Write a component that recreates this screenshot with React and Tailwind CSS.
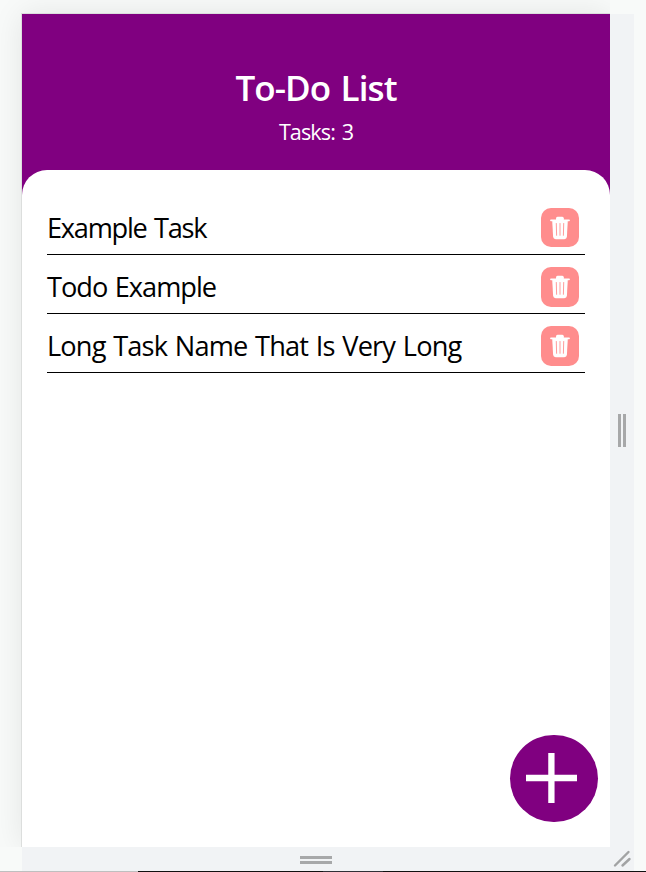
const tasks = [
  { name: "Example Task", tracking: "tracking-[-1.25px]", button: "h-[39px]" },
  { name: "Todo Example", tracking: "tracking-[-1.02px]", button: "h-[40px]" },
  { name: "Long Task Name That Is Very Long", tracking: "tracking-[-0.86px]", button: "h-[40px]" },
];

function TrashIcon() {
  return (
    <svg className="h-[24px] w-[20px]" viewBox="0 0 20 24" fill="none">
      <path d="M6 4V2.2Q6 .7 7.5.7h4.8q1.5 0 1.5 1.5V4" fill="white" />
      <path d="M1 4.3h18" stroke="white" strokeWidth="1.8" strokeLinecap="round" />
      <path d="M2.2 4.5h15.6l-.9 16.3q-.2 2.4-2.6 2.4H5.7q-2.4 0-2.6-2.4z" fill="white" />
      <path d="M6.3 7.5l.3 11.8M10 7.5v11.8M13.7 7.5l-.3 11.8" stroke="#ff9c9c" strokeWidth="1" strokeLinecap="round" />
    </svg>
  );
}

function Task({ name, tracking, button }) {
  return (
    <li className="flex h-[59px] items-start justify-between border-b border-black pr-[6px] pt-[12px]">
      <span className={`whitespace-nowrap text-[27.2px] leading-[40px] [word-spacing:1.5px] ${tracking}`}>{name}</span>
      <button aria-label="Delete" className={`flex w-[38px] items-center justify-center rounded-[10px] bg-[#ff8d8d] ${button}`}>
        <TrashIcon />
      </button>
    </li>
  );
}

export default function App() {
  return (
    <div className="flex h-[872px] w-[646px] flex-col overflow-hidden bg-[#f8faf9] font-['Open_Sans','Noto_Sans',sans-serif] text-black">
      <div className="flex h-[871px] pl-[22px] pt-[14px]">
        <div className="flex w-[612px] flex-col bg-[#f1f3f5]">
          <div className="flex h-[833px]">
            <main className="flex w-[588px] flex-col bg-[#800080] shadow-[0_0_0_1px_#dcdedd,0_0_30px_rgba(0,0,0,0.09)] [clip-path:inset(-14px_0_0_-22px)]">
              <header className="flex h-[156px] flex-col items-center pt-[49px] text-white">
                <h1 className="text-[35px] font-semibold leading-[50px] tracking-[-0.9px] [word-spacing:2px]">To-Do List</h1>
                <p className="mt-px text-[21.6px] leading-[36px] tracking-[-0.9px] [word-spacing:2px]">Tasks: 3</p>
              </header>
              <section className="flex flex-1 flex-col justify-between rounded-t-[25px] bg-white pl-[25px] pr-[12px] pt-[26px] pb-[25px]">
                <ul className="w-[538px]">
                  {tasks.map((t) => <Task key={t.name} {...t} />)}
                </ul>
                <button aria-label="Add task" className="h-[87px] w-[88px] self-end rounded-full bg-[#800080]">
                  <svg className="h-[87px] w-[88px]" viewBox="0 0 88 87">
                    <path d="M16 43h51M41.4 18v50" stroke="white" strokeWidth="6.3" />
                  </svg>
                </button>
              </section>
            </main>
            <div className="flex w-[24px] items-center gap-[2px] pl-[8px]">
              <i className="h-[33px] w-[3px] bg-[#a7a8a9]" />
              <i className="h-[33px] w-[3px] bg-[#a7a8a9]" />
            </div>
          </div>
          <div className="flex h-[24px]">
            <div className="flex w-[588px] flex-col items-center justify-start gap-[2px] pt-[9px]">
              <i className="h-[3px] w-[32px] bg-[#a7a8a9]" />
              <i className="h-[3px] w-[32px] bg-[#a7a8a9]" />
            </div>
            <svg className="size-[24px]" viewBox="0 0 24 24" stroke="#a2a3a4" strokeWidth="2.4" strokeLinecap="round">
              <path d="M5 18.5L18.5 5M12.5 18.5l7-6.5" />
            </svg>
          </div>
        </div>
      </div>
      <div className="flex h-px bg-[#111]">
        <div className="w-[138px] bg-[#bfbfbf]" />
        <div className="ml-[185px] w-[60px] bg-[#2f2f36]" />
      </div>
    </div>
  );
}
